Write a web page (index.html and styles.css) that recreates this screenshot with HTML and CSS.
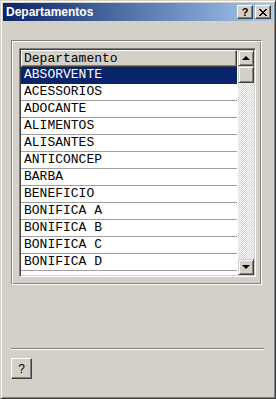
FILE: index.html
```html
<!DOCTYPE html>
<html>
<head>
  <meta charset="utf-8">
  <meta name="viewport" content="width=device-width">
  <title>Departamentos</title>
  <link rel="stylesheet" href="styles.css">
</head>
<body>

  <div class="window">
    <div class="titlebar">
      <span class="caption">Departamentos</span>
      <div class="tbuttons">
        <div class="tbtn help">?</div>
        <div class="tbtn">
          <svg width="8" height="7" viewBox="0 0 8 7">
            <path d="M0 0h2v1h1v1h2v-1h1v-1h2v1h-1v1h-1v1h-1v1h1v1h1v1h1v1h-2v-1h-1v-1h-2v1h-1v1h-2v-1h1v-1h1v-1h1v-1h-1v-1h-1v-1h-1z" fill="#000"/>
          </svg>
        </div>
      </div>
    </div>

    <div class="content">
      <div class="frame">
        <div class="list">
          <div class="grid">
            <div class="head">Departamento</div>
            <div id="rows"></div>
          </div>
          <div class="scroll">
            <div class="sbtn"><span class="up"></span></div>
            <div class="thumb"></div>
            <div class="track"></div>
            <div class="sbtn"><span class="down"></span></div>
          </div>
        </div>
      </div>

      <div class="sep"></div>

      <button class="qbtn">?</button>
    </div>
  </div>

  <script>
    const names = ['ABSORVENTE', 'ACESSORIOS', 'ADOCANTE', 'ALIMENTOS', 'ALISANTES',
      'ANTICONCEP', 'BARBA', 'BENEFICIO', 'BONIFICA A', 'BONIFICA B',
      'BONIFICA C', 'BONIFICA D'];
    document.getElementById('rows').innerHTML = names.map((n, i) =>
      `<div class="row${i === 0 ? ' sel' : ''}">${n}</div>`).join('');
  </script>

</body>
</html>
```

FILE: styles.css
```css
body {
  margin: 0;
  background: #D4D0C8;
}
.window {
  width: 276px;
  height: 399px;
  box-sizing: border-box;
  background: #D4D0C8;
  border: 1px solid;
  border-color: #D4D0C8 #404040 #404040 #D4D0C8;
  box-shadow: inset 1px 1px #fff, inset -1px -1px #808080;
  padding: 2px;
}
.titlebar {
  height: 18px;
  display: flex;
  align-items: center;
  justify-content: space-between;
  padding: 0 2px 0 2px;
  background: linear-gradient(to right, #0A246A, #A6CAF0);
}
.caption {
  color: #fff;
  font: bold 12px "Liberation Sans", Arial, sans-serif;
  padding-left: 1px;
}
.tbuttons {
  display: flex;
  gap: 2px;
}
.tbtn {
  width: 16px;
  height: 14px;
  box-sizing: border-box;
  background: #D4D0C8;
  border: 1px solid;
  border-color: #fff #404040 #404040 #fff;
  box-shadow: inset -1px -1px #808080;
  display: flex;
  align-items: center;
  justify-content: center;
}
.tbtn.help {
  font: bold 11px "Liberation Sans", Arial, sans-serif;
  line-height: 12px;
}
.content {
  padding: 19px 0 0 8px;
}
.frame {
  width: 251px;
  height: 245px;
  box-sizing: border-box;
  border: 1px solid;
  border-color: #808080 #fff #fff #808080;
  box-shadow: inset 1px 1px #fff, inset -1px -1px #808080;
  padding: 7px 0 0 7px;
}
.list {
  width: 237px;
  height: 229px;
  box-sizing: border-box;
  border: 1px solid;
  border-color: #808080 #fff #fff #808080;
  box-shadow: inset 1px 1px #404040, inset -1px -1px #D4D0C8;
  padding: 1px;
  display: flex;
  background: #fff;
}
.grid {
  flex: 1;
  font: 13px "Liberation Mono", "Courier New", monospace;
  color: #000;
  overflow: hidden;
  padding-right: 1px;
}
.head {
  height: 17px;
  box-sizing: border-box;
  background: #D4D0C8;
  border: 1px solid;
  border-color: #fff #404040 #404040 #fff;
  box-shadow: inset -1px -1px #808080;
  padding-left: 2px;
  line-height: 15px;
}
.row {
  height: 17px;
  box-sizing: border-box;
  border-bottom: 1px solid #A0A0A0;
  padding-left: 3px;
  line-height: 16px;
}
.row.sel {
  background: #0A246A;
  color: #fff;
  border-bottom-color: #0A246A;
}
.scroll {
  width: 16px;
  display: flex;
  flex-direction: column;
}
.sbtn, .thumb {
  height: 16px;
  box-sizing: border-box;
  background: #D4D0C8;
  border: 1px solid;
  border-color: #D4D0C8 #404040 #404040 #D4D0C8;
  box-shadow: inset 1px 1px #fff, inset -1px -1px #808080;
  display: flex;
  align-items: center;
  justify-content: center;
}
.thumb {
  height: 17px;
}
.track {
  flex: 1;
  background: repeating-conic-gradient(#fff 0 25%, #D4D0C8 0 50%) 0 0 / 2px 2px;
}
.up, .down {
  width: 0;
  height: 0;
  border-left: 4px solid transparent;
  border-right: 4px solid transparent;
}
.up {
  border-bottom: 4px solid #000;
  margin-top: -1px;
}
.down {
  border-top: 4px solid #000;
}
.sep {
  width: 253px;
  margin-top: 63px;
  border-top: 1px solid #808080;
  border-bottom: 1px solid #fff;
}
.qbtn {
  display: block;
  margin-top: 8px;
  width: 21px;
  height: 21px;
  padding: 0;
  background: #D4D0C8;
  border: 1px solid;
  border-color: #fff #404040 #404040 #fff;
  box-shadow: inset -1px -1px #808080;
  font: 12px "Liberation Sans", Arial, sans-serif;
  color: #000;
}
```
